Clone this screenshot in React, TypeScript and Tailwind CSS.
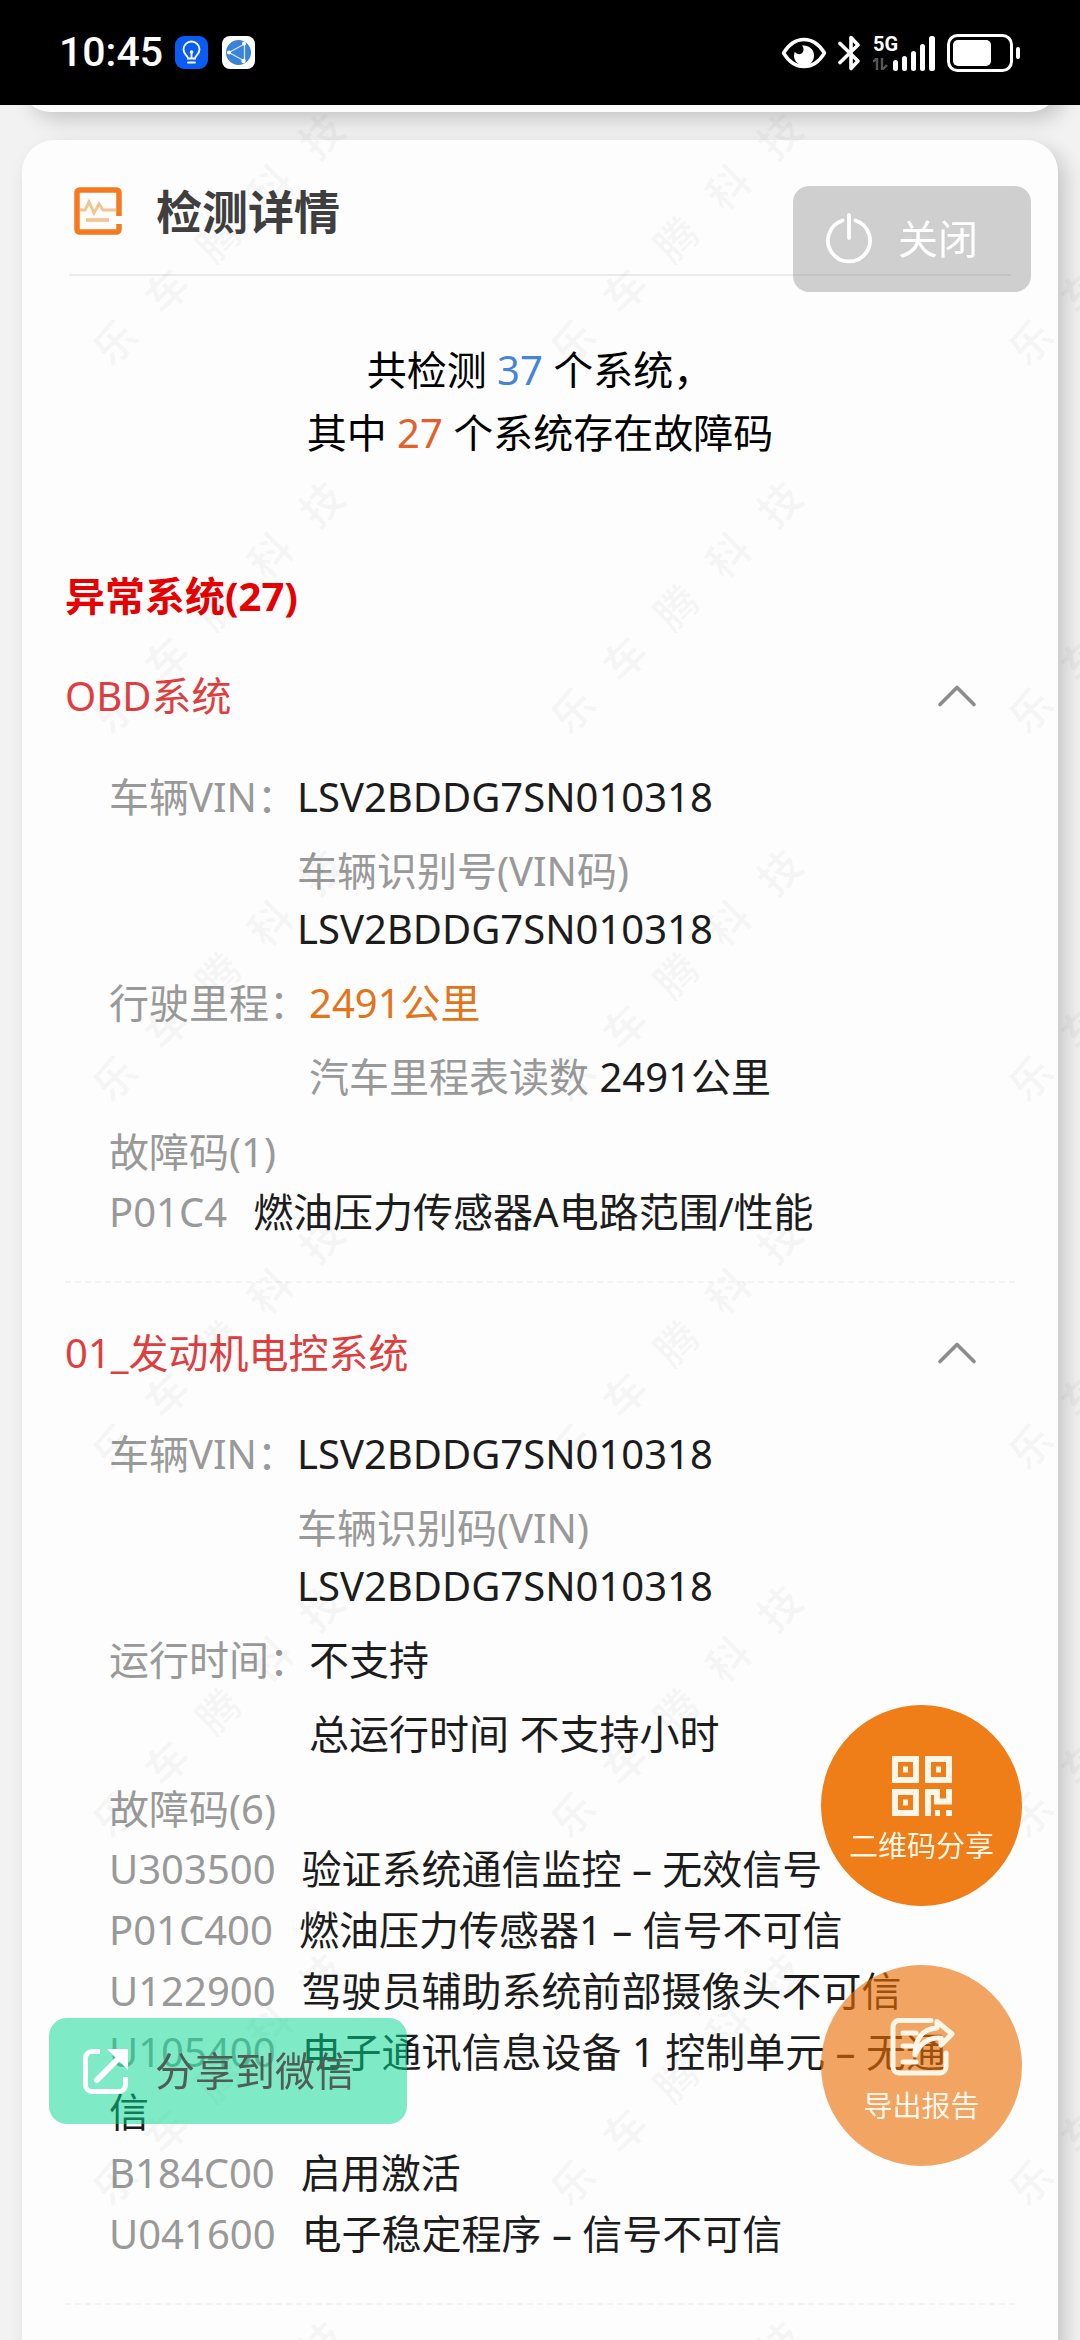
import { useState } from "react";
import { ChevronUp } from "lucide-react";

type Reading = {
  label: string;
  value: string;
  highlight?: boolean;
  detailLabel?: string;
  detail: string;
  stacked?: boolean;
};

type Fault = {
  code: string;
  desc: string;
};

type CarSystem = {
  name: string;
  readings: Reading[];
  faults: Fault[];
};

const SYSTEMS: CarSystem[] = [
  {
    name: "OBD系统",
    readings: [
      {
        label: "车辆VIN",
        value: "LSV2BDDG7SN010318",
        detailLabel: "车辆识别号(VIN码)",
        detail: "LSV2BDDG7SN010318",
        stacked: true,
      },
      {
        label: "行驶里程",
        value: "2491公里",
        highlight: true,
        detailLabel: "汽车里程表读数",
        detail: "2491公里",
      },
    ],
    faults: [{ code: "P01C4", desc: "燃油压力传感器A电路范围/性能" }],
  },
  {
    name: "01_发动机电控系统",
    readings: [
      {
        label: "车辆VIN",
        value: "LSV2BDDG7SN010318",
        detailLabel: "车辆识别码(VIN)",
        detail: "LSV2BDDG7SN010318",
        stacked: true,
      },
      { label: "运行时间", value: "不支持", detail: "总运行时间 不支持小时" },
    ],
    faults: [
      { code: "U303500", desc: "验证系统通信监控 – 无效信号" },
      { code: "P01C400", desc: "燃油压力传感器1 – 信号不可信" },
      { code: "U122900", desc: "驾驶员辅助系统前部摄像头不可信" },
      { code: "U105400", desc: "电子通讯信息设备 1 控制单元 – 无通信" },
      { code: "B184C00", desc: "启用激活" },
      { code: "U041600", desc: "电子稳定程序 – 信号不可信" },
    ],
  },
];

const WATERMARK = ["乐", "车", "腾", "科", "技"];

/** ---------------- 状态栏 ---------------- */
function StatusBar() {
  return (
    <header className="relative z-10 flex h-[105px] items-center justify-between bg-black pr-[60px] pl-[59px] text-white">
      <div className="flex items-center">
        <span className="w-[116px] font-['Roboto','Noto_Sans_CJK_SC',sans-serif] text-[41px] leading-none font-medium">
          10:45
        </span>
        <svg className="h-[33px] w-[33px]" viewBox="0 0 33 33" fill="none">
          <rect width="33" height="33" rx="9" fill="#0b5cf5" />
          <path
            d="M13 22.5c0-2.6-4.5-4.2-4.5-9a8 8 0 0 1 16 0c0 4.8-4.5 6.4-4.5 9z"
            stroke="#fff"
            strokeWidth="1.8"
          />
          <path d="M13 26.5h7M16.5 17v5" stroke="#fff" strokeWidth="1.8" strokeLinecap="round" />
          <circle cx="16.5" cy="16" r="1.8" fill="#fff" />
        </svg>
        <svg className="ml-[14px] h-[33px] w-[33px]" viewBox="0 0 33 33" fill="none">
          <rect width="33" height="33" rx="8" fill="#fff" />
          <circle cx="16.5" cy="16.5" r="12.5" fill="#3b82dc" />
          <path d="M7 16.5 22.5 8v17z" stroke="#d5e6fb" strokeWidth="1.3" />
          <circle cx="7" cy="16.5" r="2" fill="#fff" />
          <circle cx="22" cy="7.5" r="2" fill="#fff" />
          <circle cx="21.5" cy="25" r="2.2" fill="#fff" />
        </svg>
      </div>

      <div className="flex items-center">
        <svg className="h-[34px] w-[46px]" viewBox="0 0 46 34" fill="none">
          <path
            d="M2.5 17C8 8 15 3.500 23 3.500S38 8 43.500 17C38 26 31 30.500 23 30.500S8 26 2.500 17z"
            stroke="#fff"
            strokeWidth="3.4"
            strokeLinejoin="round"
          />
          <path
            d="M21 9.500c6-.8 12 3 12 10 0 6-4 10-9.500 10S13 25.500 13 20c0-1.500.3-3 .8-4.200 1.700 2.400 4.600 3 6.700 1.700 2.600-1.700 2.700-5.500.5-8z"
            fill="#fff"
          />
        </svg>
        <svg className="ml-[11px] h-[36px] w-[23px]" viewBox="0 0 23 36" fill="none">
          <path
            d="M2 8.5 20 26l-7 7.500v-31L20 10 2 27.500"
            stroke="#fff"
            strokeWidth="3.6"
            strokeLinecap="round"
            strokeLinejoin="round"
          />
        </svg>
        <div className="ml-[12px] flex h-[36px]">
          <div className="flex w-[20px] flex-col">
            <span className="font-['Roboto','Noto_Sans_CJK_SC',sans-serif] text-[20px] leading-[18px] font-bold">5G</span>
            <svg className="mt-[5px] h-[12px] w-[16px]" viewBox="0 0 16 12">
              <path d="M0 4 4 0v12M9 0v12l5-5" fill="none" stroke="#555" strokeWidth="2.4" />
            </svg>
          </div>
          <svg className="h-[36px] w-[42px]" viewBox="0 0 42 36" fill="#fff">
            <rect x="0" y="25" width="5" height="11" rx="2.5" />
            <rect x="9" y="21" width="5" height="15" rx="2.5" />
            <rect x="18" y="16" width="5" height="20" rx="2.5" />
            <rect x="27" y="9" width="5" height="27" rx="2.5" />
            <rect x="36" y="1" width="6" height="35" rx="2.5" />
          </svg>
        </div>
        <svg className="ml-[12px] h-[38px] w-[73px]" viewBox="0 0 73 38" fill="none">
          <rect x="1.5" y="1.5" width="63" height="35" rx="9" stroke="#fff" strokeWidth="3" />
          <rect x="6" y="6" width="38" height="26" rx="5" fill="#fff" />
          <rect x="69" y="13" width="4" height="12" rx="2" fill="#fff" />
        </svg>
      </div>
    </header>
  );
}

/** ---------------- 水印 ---------------- */
function Watermark() {
  return (
    <div
      aria-hidden="true"
      className="pointer-events-none absolute -top-[50px] right-0 bottom-0 -left-[11px] grid auto-rows-[368px] grid-cols-[repeat(3,458px)] overflow-hidden text-black/[0.03] select-none"
    >
      {Array.from({ length: 21 }, (_, i) => (
        <div key={i} className="flex items-center justify-center">
          <div className="flex -rotate-45 gap-[31px] text-[42px] leading-[42px] font-bold">
            {WATERMARK.map((ch) => (
              <span key={ch}>{ch}</span>
            ))}
          </div>
        </div>
      ))}
    </div>
  );
}

function ReadingRow({ reading }: { reading: Reading }) {
  return (
    <div className="flex leading-[58px]">
      <dt className="shrink-0 text-[#999999]">{reading.label}：</dt>
      <dd className="flex flex-col gap-4 text-[#1c1c1c]">
        <span className={reading.highlight ? "text-[#e2741a]" : ""}>{reading.value}</span>
        <span>
          {reading.detailLabel && (
            <span className={reading.stacked ? "block text-[#999999]" : "text-[#999999]"}>
              {reading.detailLabel}
            </span>
          )}
          {reading.detailLabel && !reading.stacked && " "}
          {reading.detail}
        </span>
      </dd>
    </div>
  );
}

function SystemSection({ system }: { system: CarSystem }) {
  const [open, setOpen] = useState(true);

  return (
    <section className="border-b-2 border-dashed border-[#f3f3f3] pt-[30px] pb-[39px]">
      <button
        type="button"
        aria-expanded={open}
        onClick={() => setOpen(!open)}
        className="flex h-20 w-full items-center justify-between pr-6 text-left text-[#e03e3e]"
      >
        {system.name}
        <ChevronUp
          className={open ? "size-[68px] text-[#8c8c8c]" : "size-[68px] rotate-180 text-[#8c8c8c]"}
          strokeWidth={1.3}
        />
      </button>

      {open && (
        <div className="mt-8 px-11">
          <dl className="flex flex-col gap-4">
            {system.readings.map((r) => (
              <ReadingRow key={r.label} reading={r} />
            ))}
          </dl>
          <h3 className="mt-4 leading-[60px] text-[#999999]">故障码({system.faults.length})</h3>
          <ul className="flex flex-col gap-px leading-[60px]">
            {system.faults.map((f) => (
              <li key={f.code} className="text-[#1c1c1c]">
                <span className="mr-[26px] text-[#999999]">{f.code}</span>
                {f.desc}
              </li>
            ))}
          </ul>
        </div>
      )}
    </section>
  );
}

/** ---------------- 悬浮按钮 ---------------- */
function CloseButton() {
  return (
    <button
      type="button"
      className="fixed top-[186px] right-[49px] flex h-[106px] w-[238px] items-center rounded-[16px] bg-[#898989]/40 pl-[33px] text-[40px] text-white"
    >
      <svg className="mr-[26px] h-[52px] w-[46px]" viewBox="0 0 46 52" fill="none">
        <path
          d="M16.5 7.500a21 21 0 1 0 13 0M23 2v23"
          stroke="#fff"
          strokeWidth="3.8"
          strokeLinecap="round"
        />
      </svg>
      关闭
    </button>
  );
}

function WechatButton() {
  return (
    <button
      type="button"
      className="fixed top-[2018px] left-[49px] flex h-[106px] w-[358px] items-center rounded-[18px] bg-[#00d991]/50 pl-[33px] text-[40px] text-[#505c56]"
    >
      <svg className="mr-[26px] h-[47px] w-[47px]" viewBox="0 0 47 47" fill="none">
        <path
          d="M18 3.500h-8A6.500 6.500 0 0 0 3.500 10v27a6.500 6.500 0 0 0 6.500 6.500h27a6.500 6.500 0 0 0 6.500-6.500v-8"
          stroke="#fff"
          strokeWidth="5"
        />
        <path d="M15 32 37 10" stroke="#fff" strokeWidth="6" strokeLinecap="round" />
        <path d="M25 1h21v21z" fill="#fff" />
      </svg>
      分享到微信
    </button>
  );
}

function QrButton() {
  return (
    <button
      type="button"
      className="flex size-[201px] flex-col items-center rounded-full bg-[#ef7e18] pt-[51px] text-[29px] leading-[44px] text-[#fff6ea]"
    >
      <svg className="mb-2 h-[60px] w-[60px]" viewBox="0 0 60 60" fill="none" stroke="#fff6ea" strokeWidth="6">
        <rect x="3" y="3" width="21" height="21" />
        <rect x="36" y="3" width="21" height="21" />
        <rect x="3" y="36" width="21" height="21" />
        <path d="M11 13.5h5M44 13.5h5M11 46.500h5" />
        <path d="M36 60V36h9v9.500h12V33M43 57h5M54 57h6" />
      </svg>
      二维码分享
    </button>
  );
}

function ExportButton() {
  return (
    <button
      type="button"
      className="flex size-[201px] flex-col items-center rounded-full bg-[#ec6f05]/62 pt-[51px] text-[29px] leading-[44px] text-[#fff6ea]"
    >
      <svg
        className="mb-2 h-[60px] w-[66px]"
        viewBox="0 0 66 60"
        fill="none"
        stroke="#fff6ea"
        strokeWidth="5"
        strokeLinecap="round"
        strokeLinejoin="round"
      >
        <path d="M42 4.5H10a6 6 0 0 0-6 6V51a6 6 0 0 0 6 6h41a6 6 0 0 0 6-6V37" />
        <path d="M48 5.500 63 18 52 29v-7c-12-1-21 5-26 17 0-16 7-26 22-27z" />
        <path d="M14 17h13M14 30h9M14 46h13" />
      </svg>
      导出报告
    </button>
  );
}

export default function App() {
  return (
    <div className="min-h-screen bg-[#f2f2f2] font-['Noto_Sans','Noto_Sans_CJK_SC',sans-serif] text-[40px] text-black">
      <StatusBar />

      <main className="relative h-[calc(100vh-105px)] overflow-hidden px-[22px]">
        {/* 上一张卡片的底边 */}
        <div className="-mt-[93px] h-[100px] rounded-[28px] bg-[#fdfdfd] shadow-[8px_8px_20px_rgba(0,0,0,0.18)]" />

        <div className="mt-7 rounded-[32px] bg-[#fdfdfd] px-[43px] pb-32 shadow-[8px_8px_20px_rgba(0,0,0,0.18)]">
          <div className="mx-1 flex h-[136px] items-center border-b-2 border-[#ebebeb] pt-2">
            <svg className="ml-[5px] h-[48px] w-[48px]" viewBox="0 0 48 48" fill="none">
              <path
                d="M45 29V5.500A2.500 2.500 0 0 0 42.500 3h-37A2.500 2.500 0 0 0 3 5.500v37A2.500 2.500 0 0 0 5.500 45h37a2.500 2.500 0 0 0 2.500-2.500V37"
                stroke="#f57a1f"
                strokeWidth="5.5"
              />
              <path d="M6 23h5l4-8 5 11 5-9 4 6h13" stroke="#f3c48f" strokeWidth="3" />
              <path d="M12 33h23" stroke="#f3c48f" strokeWidth="3.6" />
            </svg>
            <h1 className="ml-[34px] text-[46px] leading-[60px] font-bold text-[#3f3f3f]">检测详情</h1>
          </div>

          <p className="mt-[62px] text-center leading-[63px]">
            共检测 <span className="text-[#4585d8]">37</span> 个系统，
            <br />
            其中 <span className="text-[#e2602a]">27</span> 个系统存在故障码
          </p>

          <h2 className="mt-[102px] leading-[60px] font-bold text-[#e60000]">异常系统(27)</h2>

          {SYSTEMS.map((s) => (
            <SystemSection key={s.name} system={s} />
          ))}
        </div>

        <Watermark />
      </main>

      <CloseButton />
      <WechatButton />
      <div className="fixed top-[1705px] right-[58px] flex flex-col gap-[59px]">
        <QrButton />
        <ExportButton />
      </div>
    </div>
  );
}
